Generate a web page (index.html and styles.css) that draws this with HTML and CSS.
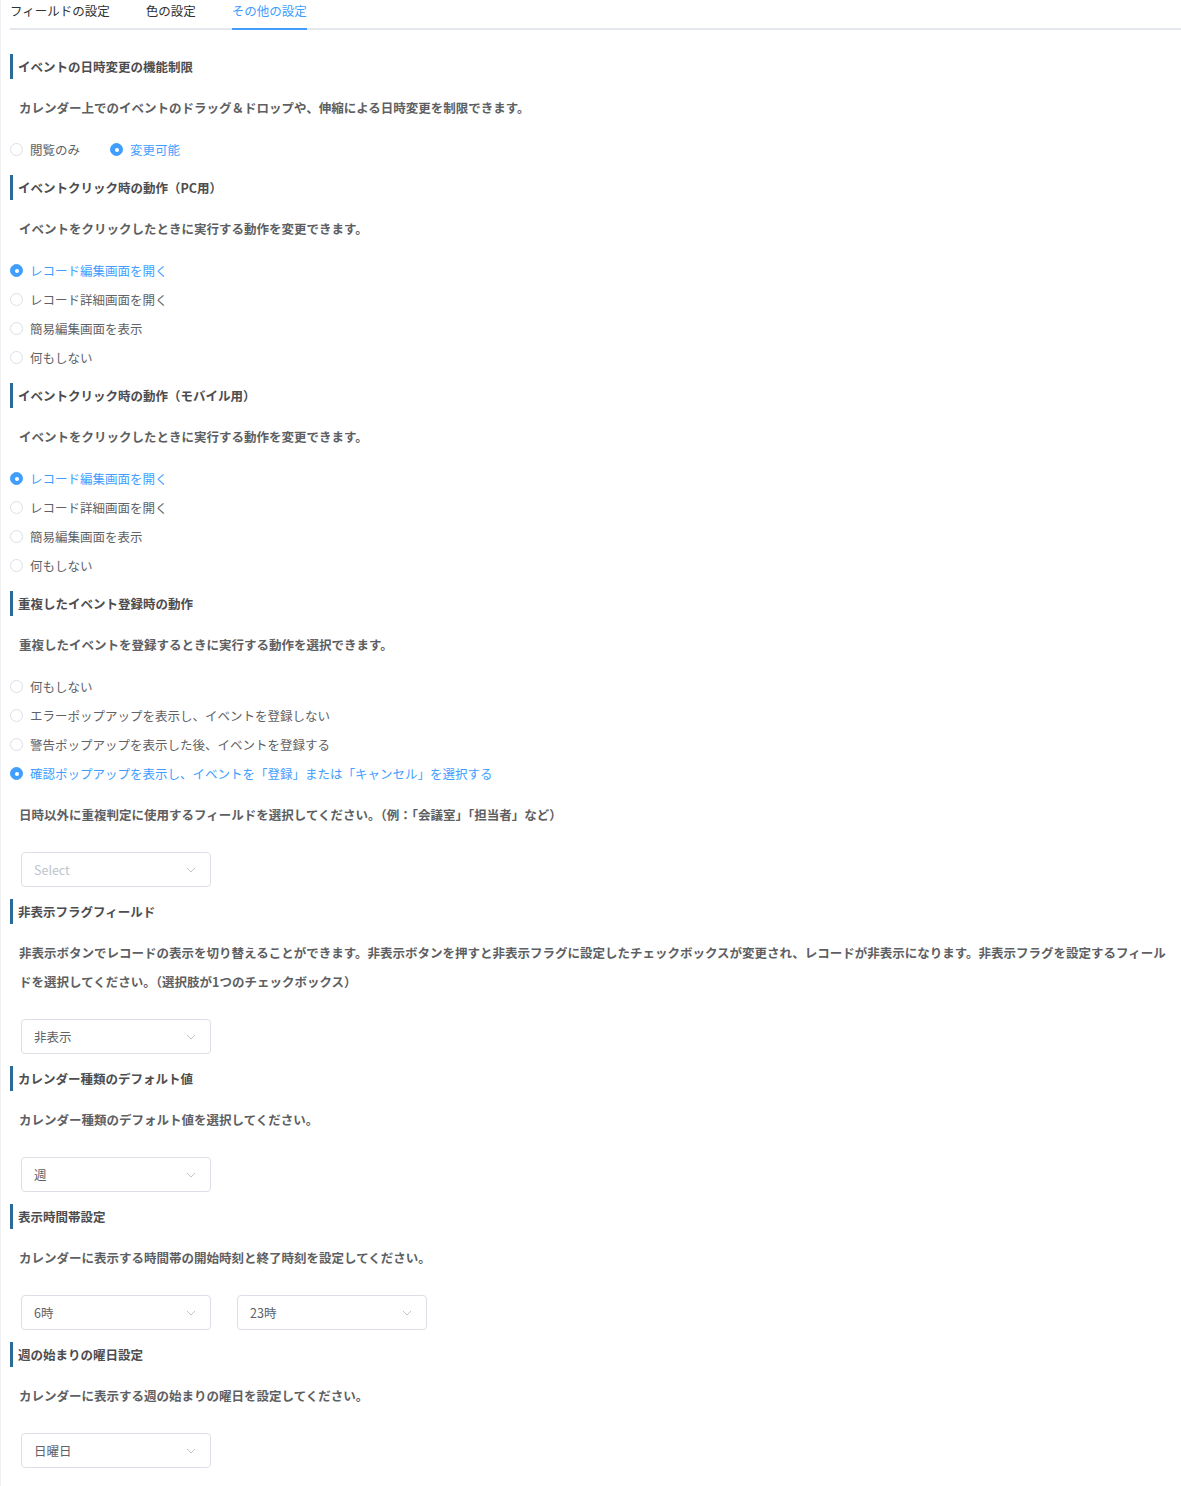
FILE: index.html
```html
<!DOCTYPE html>
<html lang="ja">
<head>
<meta charset="utf-8">
<title>その他の設定</title>
<link rel="stylesheet" href="styles.css">
</head>
<body>
<div class="page">
  <div class="tabs">
    <div class="tab">フィールドの設定</div>
    <div class="tab">色の設定</div>
    <div class="tab active">その他の設定</div>
  </div>

  <div class="content">
    <section class="section">
      <div class="title">イベントの日時変更の機能制限</div>
      <p class="desc">カレンダー上でのイベントのドラッグ＆ドロップや、伸縮による日時変更を制限できます。</p>
      <div class="radios inline">
        <label class="radio"><span class="dot"></span><span class="label">閲覧のみ</span></label>
        <label class="radio checked"><span class="dot"></span><span class="label">変更可能</span></label>
      </div>
    </section>

    <section class="section">
      <div class="title">イベントクリック時の動作（PC用）</div>
      <p class="desc">イベントをクリックしたときに実行する動作を変更できます。</p>
      <div class="radios">
        <label class="radio checked"><span class="dot"></span><span class="label">レコード編集画面を開く</span></label>
        <label class="radio"><span class="dot"></span><span class="label">レコード詳細画面を開く</span></label>
        <label class="radio"><span class="dot"></span><span class="label">簡易編集画面を表示</span></label>
        <label class="radio"><span class="dot"></span><span class="label">何もしない</span></label>
      </div>
    </section>

    <section class="section">
      <div class="title">イベントクリック時の動作（モバイル用）</div>
      <p class="desc">イベントをクリックしたときに実行する動作を変更できます。</p>
      <div class="radios">
        <label class="radio checked"><span class="dot"></span><span class="label">レコード編集画面を開く</span></label>
        <label class="radio"><span class="dot"></span><span class="label">レコード詳細画面を開く</span></label>
        <label class="radio"><span class="dot"></span><span class="label">簡易編集画面を表示</span></label>
        <label class="radio"><span class="dot"></span><span class="label">何もしない</span></label>
      </div>
    </section>

    <section class="section">
      <div class="title">重複したイベント登録時の動作</div>
      <p class="desc">重複したイベントを登録するときに実行する動作を選択できます。</p>
      <div class="radios">
        <label class="radio"><span class="dot"></span><span class="label">何もしない</span></label>
        <label class="radio"><span class="dot"></span><span class="label">エラーポップアップを表示し、イベントを登録しない</span></label>
        <label class="radio"><span class="dot"></span><span class="label">警告ポップアップを表示した後、イベントを登録する</span></label>
        <label class="radio checked"><span class="dot"></span><span class="label">確認ポップアップを表示し、イベントを「登録」または「キャンセル」を選択する</span></label>
      </div>
      <p class="desc sub">日時以外に重複判定に使用するフィールドを選択してください。（例：「会議室」「担当者」など）</p>
      <div class="selects">
        <div class="select placeholder"><span>Select</span><svg class="arrow" width="10" height="6" viewBox="0 0 10 6"><polyline points="1,1 5,5 9,1" fill="none" stroke="#c0c4cc" stroke-width="1"/></svg></div>
      </div>
    </section>

    <section class="section">
      <div class="title">非表示フラグフィールド</div>
      <p class="desc">非表示ボタンでレコードの表示を切り替えることができます。非表示ボタンを押すと非表示フラグに設定したチェックボックスが変更され、レコードが非表示になります。非表示フラグを設定するフィールドを選択してください。（選択肢が1つのチェックボックス）</p>
      <div class="selects">
        <div class="select"><span>非表示</span><svg class="arrow" width="10" height="6" viewBox="0 0 10 6"><polyline points="1,1 5,5 9,1" fill="none" stroke="#c0c4cc" stroke-width="1"/></svg></div>
      </div>
    </section>

    <section class="section">
      <div class="title">カレンダー種類のデフォルト値</div>
      <p class="desc">カレンダー種類のデフォルト値を選択してください。</p>
      <div class="selects">
        <div class="select"><span>週</span><svg class="arrow" width="10" height="6" viewBox="0 0 10 6"><polyline points="1,1 5,5 9,1" fill="none" stroke="#c0c4cc" stroke-width="1"/></svg></div>
      </div>
    </section>

    <section class="section">
      <div class="title">表示時間帯設定</div>
      <p class="desc">カレンダーに表示する時間帯の開始時刻と終了時刻を設定してください。</p>
      <div class="selects">
        <div class="select"><span>6時</span><svg class="arrow" width="10" height="6" viewBox="0 0 10 6"><polyline points="1,1 5,5 9,1" fill="none" stroke="#c0c4cc" stroke-width="1"/></svg></div>
        <div class="select"><span>23時</span><svg class="arrow" width="10" height="6" viewBox="0 0 10 6"><polyline points="1,1 5,5 9,1" fill="none" stroke="#c0c4cc" stroke-width="1"/></svg></div>
      </div>
    </section>

    <section class="section">
      <div class="title">週の始まりの曜日設定</div>
      <p class="desc">カレンダーに表示する週の始まりの曜日を設定してください。</p>
      <div class="selects">
        <div class="select"><span>日曜日</span><svg class="arrow" width="10" height="6" viewBox="0 0 10 6"><polyline points="1,1 5,5 9,1" fill="none" stroke="#c0c4cc" stroke-width="1"/></svg></div>
      </div>
    </section>
  </div>
</div>
</body>
</html>
```

FILE: styles.css
```css
html, body {
  margin: 0;
  padding: 0;
  background: #ffffff;
}

body {
  font-family: "Noto Sans CJK JP", "Noto Sans", sans-serif;
  font-size: 12.5px;
  color: #606266;
}

.page {
  border-left: 1px solid #f0f0f2;
  padding-left: 9px;
  min-height: 1486px;
  box-sizing: border-box;
}

.tabs {
  display: flex;
  gap: 36px;
  height: 28px;
  border-bottom: 2px solid #e4e7ed;
}

.tab {
  height: 28px;
  line-height: 22px;
  color: #303133;
  border-bottom: 2px solid transparent;
  white-space: nowrap;
}

.tab.active {
  color: #409eff;
  border-bottom-color: #409eff;
}

.content {
  padding-top: 24px;
}

.section + .section {
  margin-top: 11px;
}

.title {
  height: 25px;
  line-height: 25px;
  border-left: 3px solid #2b6b97;
  padding-left: 5px;
  font-weight: bold;
  color: #4d4d4f;
}

.desc {
  margin: 14px 0 0;
  padding: 0 10px 0 9px;
  line-height: 29px;
  font-weight: bold;
  color: #5e5f63;
}

.desc.sub {
  margin-top: 12px;
}

.radios {
  margin-top: 13px;
}

.radios.inline {
  display: flex;
}

.radio {
  display: flex;
  align-items: center;
  height: 29px;
  line-height: 29px;
  color: #606266;
  white-space: nowrap;
}

.radios.inline .radio {
  margin-right: 30px;
}

.dot {
  width: 13px;
  height: 13px;
  box-sizing: border-box;
  border: 1px solid #dcdfe6;
  border-radius: 50%;
  background: #ffffff;
  margin-right: 7px;
  display: flex;
  align-items: center;
  justify-content: center;
  flex-shrink: 0;
}

.radio.checked .dot {
  background: #409eff;
  border-color: #409eff;
}

.radio.checked .dot::after {
  content: "";
  width: 4px;
  height: 4px;
  border-radius: 50%;
  background: #ffffff;
}

.radio.checked .label {
  color: #409eff;
}

.selects {
  display: flex;
  gap: 26px;
  margin-top: 23px;
  padding-left: 11px;
  padding-bottom: 1px;
}

.select {
  width: 190px;
  height: 35px;
  box-sizing: border-box;
  border: 1px solid #dcdfe6;
  border-radius: 4px;
  padding: 0 14px 0 12px;
  display: flex;
  align-items: center;
  justify-content: space-between;
  color: #606266;
}

.select.placeholder {
  color: #c0c4cc;
}

.arrow {
  display: block;
}
```
